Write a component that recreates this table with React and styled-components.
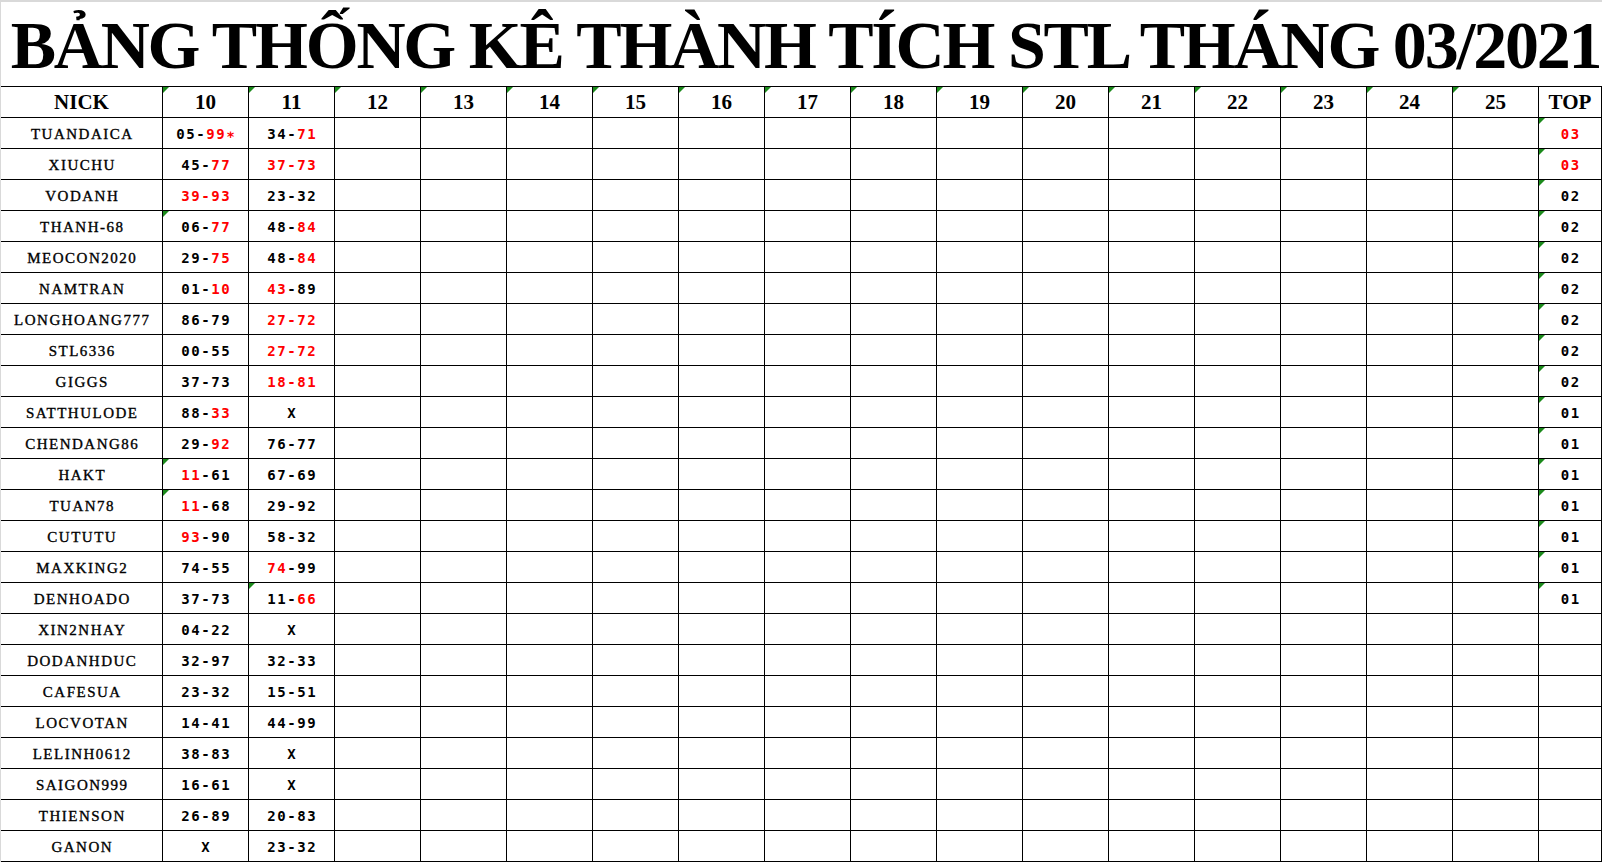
import React from 'react';
import styled, { createGlobalStyle, css } from 'styled-components';

const Global = createGlobalStyle`
  html, body { margin: 0; padding: 0; background: #fff; }
  body { width: 1602px; height: 862px; overflow: hidden; }
`;

const Page = styled.div`
  width: 1602px;
  height: 862px;
  box-sizing: border-box;
  border-top: 2px solid #d9d9d9;
  border-left: 1px solid #d9d9d9;
  background: #fff;
  overflow: hidden;
`;

const Title = styled.h1`
  margin: 0;
  height: 84px;
  box-sizing: border-box;
  padding-top: 3px;
  padding-left: 8px;
  font-family: "Liberation Serif", "Times New Roman", serif;
  font-weight: 700;
  font-size: 68px;
  line-height: 81px;
  letter-spacing: -2.2px;
  text-align: center;
  white-space: nowrap;
  color: #000;
`;

const Sheet = styled.div`
  display: grid;
  grid-template-columns: 162px repeat(16, 86px) 63px;
  grid-auto-rows: 31px;
  border-top: 1px solid #000;
`;

const cellBase = css`
  position: relative;
  box-sizing: border-box;
  border-right: 1px solid #000;
  border-bottom: 1px solid #000;
  display: flex;
  align-items: center;
  justify-content: center;
  white-space: nowrap;
  color: #000;
  ${(p) =>
    p.$flag &&
    css`
      &::before {
        content: "";
        position: absolute;
        top: 0;
        left: 0;
        border-top: 6px solid #1b8a1b;
        border-right: 6px solid transparent;
      }
    `}
`;

const HeadCell = styled.div`
  ${cellBase};
  padding-top: 1px;
  font-family: "Liberation Serif", "Times New Roman", serif;
  font-weight: 700;
  font-size: 21px;
`;

const NickCell = styled.div`
  ${cellBase};
  padding-top: 3px;
  font-family: "Liberation Serif", "Times New Roman", serif;
  font-size: 15px;
  letter-spacing: 1.5px;
  padding-left: 1.5px;
  -webkit-text-stroke: 0.35px #000;
`;

const NumCell = styled.div`
  ${cellBase};
  padding-top: 2px;
  padding-left: 1.6px;
  font-family: "DejaVu Sans Mono", "Liberation Mono", monospace;
  font-weight: 700;
  font-size: 14px;
  letter-spacing: 1.6px;
`;

const Red = styled.span`
  color: #ff0000;
`;

const days = [10, 11, 12, 13, 14, 15, 16, 17, 18, 19, 20, 21, 22, 23, 24, 25];

const rows = [
  { nick: 'TUANDAICA', d: ['05-[99∗]', '34-[71]'], top: '[03]' },
  { nick: 'XIUCHU', d: ['45-[77]', '[37-73]'], top: '[03]' },
  { nick: 'VODANH', d: ['[39-93]', '23-32'], top: '02' },
  { nick: 'THANH-68', d: ['06-[77]', '48-[84]'], top: '02', f: [0] },
  { nick: 'MEOCON2020', d: ['29-[75]', '48-[84]'], top: '02' },
  { nick: 'NAMTRAN', d: ['01-[10]', '[43]-89'], top: '02' },
  { nick: 'LONGHOANG777', d: ['86-79', '[27-72]'], top: '02' },
  { nick: 'STL6336', d: ['00-55', '[27-72]'], top: '02' },
  { nick: 'GIGGS', d: ['37-73', '[18-81]'], top: '02' },
  { nick: 'SATTHULODE', d: ['88-[33]', 'X'], top: '01' },
  { nick: 'CHENDANG86', d: ['29-[92]', '76-77'], top: '01' },
  { nick: 'HAKT', d: ['[11]-61', '67-69'], top: '01', f: [0] },
  { nick: 'TUAN78', d: ['[11]-68', '29-92'], top: '01', f: [0] },
  { nick: 'CUTUTU', d: ['[93]-90', '58-32'], top: '01' },
  { nick: 'MAXKING2', d: ['74-55', '[74]-99'], top: '01' },
  { nick: 'DENHOADO', d: ['37-73', '11-[66]'], top: '01', f: [1] },
  { nick: 'XIN2NHAY', d: ['04-22', 'X'], top: '' },
  { nick: 'DODANHDUC', d: ['32-97', '32-33'], top: '' },
  { nick: 'CAFESUA', d: ['23-32', '15-51'], top: '' },
  { nick: 'LOCVOTAN', d: ['14-41', '44-99'], top: '' },
  { nick: 'LELINH0612', d: ['38-83', 'X'], top: '' },
  { nick: 'SAIGON999', d: ['16-61', 'X'], top: '' },
  { nick: 'THIENSON', d: ['26-89', '20-83'], top: '' },
  { nick: 'GANON', d: ['X', '23-32'], top: '' },
];

function Value({ text }) {
  if (!text) return null;
  const parts = text.split(/(\[[^\]]*\])/).filter(Boolean);
  return (
    <span>
      {parts.map((p, i) =>
        p.startsWith('[') ? <Red key={i}>{p.slice(1, -1)}</Red> : <React.Fragment key={i}>{p}</React.Fragment>
      )}
    </span>
  );
}

export default function App() {
  return (
    <>
      <Global />
      <Page>
        <Title>BẢNG THỐNG KÊ THÀNH TÍCH STL THÁNG 03/2021</Title>
        <Sheet>
          <HeadCell>NICK</HeadCell>
          {days.map((d) => (
            <HeadCell key={d} $flag>
              {d}
            </HeadCell>
          ))}
          <HeadCell>TOP</HeadCell>
          {rows.map((r) => (
            <React.Fragment key={r.nick}>
              <NickCell>{r.nick}</NickCell>
              {days.map((d, i) => (
                <NumCell key={d} $flag={r.f && r.f.includes(i)}>
                  <Value text={r.d[i]} />
                </NumCell>
              ))}
              <NumCell $flag={!!r.top}>
                <Value text={r.top} />
              </NumCell>
            </React.Fragment>
          ))}
        </Sheet>
      </Page>
    </>
  );
}
